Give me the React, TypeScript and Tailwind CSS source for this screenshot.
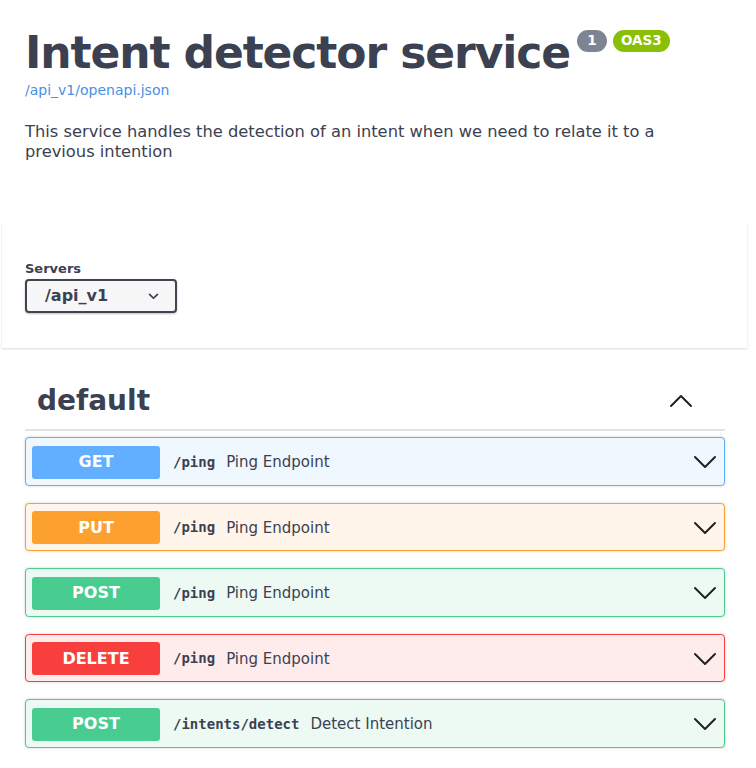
import type { ReactNode } from "react";

type Op = {
  method: string;
  path: string;
  summary: string;
  badge: string;
  border: string;
  bg: string;
};

const ops: Op[] = [
  { method: "GET", path: "/ping", summary: "Ping Endpoint", badge: "bg-[#61affe]", border: "border-[#61affe]", bg: "bg-[#eff7ff]" },
  { method: "PUT", path: "/ping", summary: "Ping Endpoint", badge: "bg-[#fca130]", border: "border-[#fca130]", bg: "bg-[#fff5ea]" },
  { method: "POST", path: "/ping", summary: "Ping Endpoint", badge: "bg-[#49cc90]", border: "border-[#49cc90]", bg: "bg-[#edfaf4]" },
  { method: "DELETE", path: "/ping", summary: "Ping Endpoint", badge: "bg-[#f93e3e]", border: "border-[#f93e3e]", bg: "bg-[#feecec]" },
  { method: "POST", path: "/intents/detect", summary: "Detect Intention", badge: "bg-[#49cc90]", border: "border-[#49cc90]", bg: "bg-[#edfaf4]" },
];

function Chevron({ up = false, className }: { up?: boolean; className?: string }) {
  return (
    <svg
      viewBox="0 0 24 14"
      width="24"
      height="14"
      fill="none"
      stroke="currentColor"
      strokeWidth="2"
      strokeLinecap="round"
      strokeLinejoin="round"
      className={className}
    >
      {up ? <polyline points="2 12 12 2 22 12" /> : <polyline points="2 2 12 12 22 2" />}
    </svg>
  );
}

function Badge({ children, className }: { children: ReactNode; className: string }) {
  return (
    <span
      className={`inline-flex h-[22px] items-center justify-center rounded-full px-[8px] text-[13.5px] font-bold leading-none text-white ${className}`}
    >
      {children}
    </span>
  );
}

function OpBlock({ op }: { op: Op }) {
  return (
    <div className={`flex h-[48.5px] items-center rounded-[4px] border ${op.border} ${op.bg} pl-[6px] pr-[7px] pt-[2px] shadow-[0_0_3px_rgba(0,0,0,0.19)]`}>
      <div
        className={`flex h-[33px] w-[128px] shrink-0 items-center justify-center rounded-[3px] ${op.badge} text-[16px] font-bold text-white`}
      >
        {op.method}
      </div>
      <span className="ml-[13px] font-['DejaVu_Sans_Mono',monospace] text-[14px] font-bold text-[#3b4151]">
        {op.path}
      </span>
      <span className="ml-[11px] text-[15px] text-[#3b4151]">{op.summary}</span>
      <Chevron className="ml-auto text-[#222]" />
    </div>
  );
}

export default function App() {
  return (
    <div className="min-h-screen bg-white font-['DejaVu_Sans',sans-serif] text-[#3b4151]">
      <div className="px-[25px] pt-[28px]">
        <div className="flex items-start">
          <h1 className="text-[44px] font-bold leading-[50px] tracking-[-1.1px] text-[#3b4151]">
            Intent detector service
          </h1>
          <div className="ml-[7px] mt-[2px] flex gap-[6px]">
            <Badge className="w-[30px] bg-[#7d8492]">1</Badge>
            <Badge className="bg-[#89bf04]">OAS3</Badge>
          </div>
        </div>
        <a className="mt-[4px] block text-[14px] leading-[17px] text-[#4990e2]">/api_v1/openapi.json</a>
        <p className="mt-[23px] w-[700px] text-[16.3px] leading-[20px] text-[#3b4151]">
          This service handles the detection of an intent when we need to relate it to a previous intention
        </p>
      </div>

      <div className="ml-[2px] mt-[60px] w-[745px] bg-white pb-[35px] pt-[30px] shadow-[0_1px_2px_rgba(0,0,0,0.15)]">
        <div className="px-[23px] pt-[9px]">
          <div className="text-[13px] font-bold leading-4 text-[#3b4151]">Servers</div>
          <div className="mt-[2px] flex h-[34px] w-[152px] items-center justify-between rounded-[4px] border-2 border-[#41444e] bg-[#f7f7f7] pl-[18px] pr-[16px] shadow-[0_1px_2px_rgba(0,0,0,0.25)]">
            <span className="text-[16px] font-bold text-[#3b4151]">/api_v1</span>
            <svg viewBox="0 0 12 8" width="11" height="7" fill="none" stroke="#3b4151" strokeWidth="2" strokeLinecap="round" strokeLinejoin="round">
              <polyline points="1.5 1.5 6 6 10.5 1.5" />
            </svg>
          </div>
        </div>
      </div>

      <div className="mx-[25px] mt-[20px] w-[700px]">
        <div className="flex h-[63px] items-center border-b-2 border-[#e3e3e3] pl-[12px] pr-[32px] pt-[5px]">
          <h3 className="text-[28px] font-bold text-[#3b4151]">default</h3>
          <Chevron up className="ml-auto text-[#222]" />
        </div>
        <div className="mt-[6px] flex flex-col gap-[17px]">
          {ops.map((op, i) => (
            <OpBlock key={i} op={op} />
          ))}
        </div>
      </div>
    </div>
  );
}
